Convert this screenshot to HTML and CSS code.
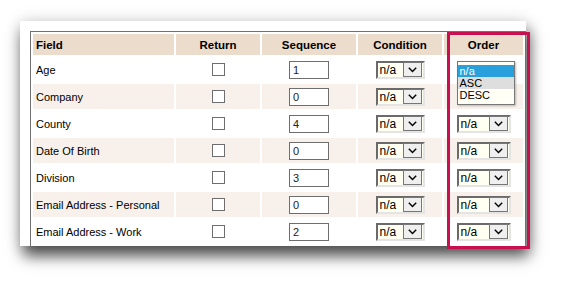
FILE: index.html
```html
<!DOCTYPE html>
<html lang="en">
<head>
  <meta charset="UTF-8" />
  <title>Report Fields</title>
  <link rel="stylesheet" href="styles.css">
</head>
<body>
  <div class="stage">
    <div class="panel">
      <table class="fields">
        <colgroup>
          <col class="c-field"><col class="c-return"><col class="c-seq"><col class="c-cond"><col class="c-order">
        </colgroup>
        <thead>
          <tr>
            <th class="left">Field</th>
            <th>Return</th>
            <th>Sequence</th>
            <th>Condition</th>
            <th>Order</th>
          </tr>
        </thead>
        <tbody>
          <tr>
            <td class="left">Age</td>
            <td><span class="check"></span></td>
            <td><span class="seq">1</span></td>
            <td><span class="select"><span class="val">n/a</span><span class="btn"><svg width="9" height="6" viewBox="0 0 9 6"><polyline points="0.8,0.8 4.5,4.6 8.2,0.8" /></svg></span></span></td>
            <td>
              <span class="select-open">
                <span class="list">
                  <span class="opt sel">n/a</span>
                  <span class="opt hover">ASC</span>
                  <span class="opt">DESC</span>
                </span>
              </span>
            </td>
          </tr>
          <tr class="alt">
            <td class="left">Company</td>
            <td><span class="check"></span></td>
            <td><span class="seq">0</span></td>
            <td><span class="select"><span class="val">n/a</span><span class="btn"><svg width="9" height="6" viewBox="0 0 9 6"><polyline points="0.8,0.8 4.5,4.6 8.2,0.8" /></svg></span></span></td>
            <td></td>
          </tr>
          <tr>
            <td class="left">County</td>
            <td><span class="check"></span></td>
            <td><span class="seq">4</span></td>
            <td><span class="select"><span class="val">n/a</span><span class="btn"><svg width="9" height="6" viewBox="0 0 9 6"><polyline points="0.8,0.8 4.5,4.6 8.2,0.8" /></svg></span></span></td>
            <td><span class="select wide"><span class="val">n/a</span><span class="btn"><svg width="9" height="6" viewBox="0 0 9 6"><polyline points="0.8,0.8 4.5,4.6 8.2,0.8" /></svg></span></span></td>
          </tr>
          <tr class="alt">
            <td class="left">Date Of Birth</td>
            <td><span class="check"></span></td>
            <td><span class="seq">0</span></td>
            <td><span class="select"><span class="val">n/a</span><span class="btn"><svg width="9" height="6" viewBox="0 0 9 6"><polyline points="0.8,0.8 4.5,4.6 8.2,0.8" /></svg></span></span></td>
            <td><span class="select wide"><span class="val">n/a</span><span class="btn"><svg width="9" height="6" viewBox="0 0 9 6"><polyline points="0.8,0.8 4.5,4.6 8.2,0.8" /></svg></span></span></td>
          </tr>
          <tr>
            <td class="left">Division</td>
            <td><span class="check"></span></td>
            <td><span class="seq">3</span></td>
            <td><span class="select"><span class="val">n/a</span><span class="btn"><svg width="9" height="6" viewBox="0 0 9 6"><polyline points="0.8,0.8 4.5,4.6 8.2,0.8" /></svg></span></span></td>
            <td><span class="select wide"><span class="val">n/a</span><span class="btn"><svg width="9" height="6" viewBox="0 0 9 6"><polyline points="0.8,0.8 4.5,4.6 8.2,0.8" /></svg></span></span></td>
          </tr>
          <tr class="alt">
            <td class="left">Email Address - Personal</td>
            <td><span class="check"></span></td>
            <td><span class="seq">0</span></td>
            <td><span class="select"><span class="val">n/a</span><span class="btn"><svg width="9" height="6" viewBox="0 0 9 6"><polyline points="0.8,0.8 4.5,4.6 8.2,0.8" /></svg></span></span></td>
            <td><span class="select wide"><span class="val">n/a</span><span class="btn"><svg width="9" height="6" viewBox="0 0 9 6"><polyline points="0.8,0.8 4.5,4.6 8.2,0.8" /></svg></span></span></td>
          </tr>
          <tr>
            <td class="left">Email Address - Work</td>
            <td><span class="check"></span></td>
            <td><span class="seq">2</span></td>
            <td><span class="select"><span class="val">n/a</span><span class="btn"><svg width="9" height="6" viewBox="0 0 9 6"><polyline points="0.8,0.8 4.5,4.6 8.2,0.8" /></svg></span></span></td>
            <td><span class="select wide"><span class="val">n/a</span><span class="btn"><svg width="9" height="6" viewBox="0 0 9 6"><polyline points="0.8,0.8 4.5,4.6 8.2,0.8" /></svg></span></span></td>
          </tr>
        </tbody>
      </table>
    </div>
    <div class="highlight"></div>
  </div>
</body>
</html>
```

FILE: styles.css
```css
body {
  margin: 0;
  background: #fff;
  font-family: 'Liberation Sans', Arial, sans-serif;
  color: #000;
}

.stage {
  position: relative;
  width: 568px;
  height: 288px;
  padding: 21px 0 0 20px;
  box-sizing: border-box;
}

.panel {
  width: 506px;
  height: 225px;
  background: #fff;
  padding: 10px 0 0 10px;
  box-sizing: border-box;
  overflow: hidden;
  box-shadow: 0 0 16px rgba(0,0,0,0.14), 3px 10px 14px rgba(0,0,0,0.68);
}

.fields {
  border-collapse: separate;
  border-spacing: 2px;
  border: 1px solid #707070;
  border-bottom: none;
  table-layout: fixed;
  width: 496px;
  font-size: 11px;
}

.c-field { width: 141px; }
.c-return { width: 84px; }
.c-seq { width: 94px; }
.c-cond { width: 84px; }
.c-order { width: 79px; }

.fields th {
  background: #ecdccb;
  height: 21px;
  padding: 0;
  font-size: 11.5px;
  font-weight: bold;
  text-align: center;
}

.fields td {
  height: 25px;
  padding: 0;
  text-align: center;
  vertical-align: middle;
}

.fields .left {
  text-align: left;
  padding-left: 3px;
}

.fields tr.alt td {
  background: #f8f0ea;
}

.check {
  display: inline-block;
  width: 11px;
  height: 11px;
  border: 1px solid #6e6e6e;
  background: #fff;
  vertical-align: middle;
}

.seq {
  display: inline-block;
  width: 35px;
  height: 16px;
  line-height: 16px;
  border: 1px solid #6e6e6e;
  background: #fff;
  text-align: left;
  padding-left: 3px;
  vertical-align: middle;
  color: #222;
}

.select {
  display: inline-flex;
  align-items: center;
  width: 49px;
  height: 18px;
  box-sizing: border-box;
  border-top: 2px solid #6a6a6a;
  border-left: 2px solid #6a6a6a;
  border-right: 2px solid #e4e4e4;
  border-bottom: 2px solid #e4e4e4;
  background: #fffff2;
  vertical-align: middle;
  font-size: 12px;
}

.select.wide {
  width: 54px;
}

.select .val {
  flex: 1;
  text-align: left;
  padding-left: 2px;
}

.select .btn {
  display: flex;
  align-items: center;
  justify-content: center;
  width: 17px;
  height: 13px;
  border: 1px solid #777;
  background: #efefef;
  margin-right: 1px;
}

.select .btn svg polyline {
  fill: none;
  stroke: #000;
  stroke-width: 1.4;
}

.select-open {
  display: inline-block;
  position: relative;
  width: 54px;
  height: 18px;
  vertical-align: middle;
}

.list {
  position: absolute;
  left: 0;
  top: 0;
  width: 58px;
  height: 44px;
  box-sizing: border-box;
  border: 1px solid #777;
  background: #fffff6;
  padding-top: 3px;
  box-shadow: 1px 1px 2px rgba(0,0,0,0.25);
  z-index: 2;
}

.opt {
  display: block;
  text-align: left;
  padding-left: 2px;
  height: 12px;
  line-height: 12px;
  font-size: 11px;
}

.opt.sel {
  background: #299fdb;
  color: #fff;
}

.opt.hover {
  background: #dedede;
}

.highlight {
  position: absolute;
  left: 447px;
  top: 32px;
  width: 83px;
  height: 217px;
  box-sizing: border-box;
  border: 3px solid #c8104f;
}
```
